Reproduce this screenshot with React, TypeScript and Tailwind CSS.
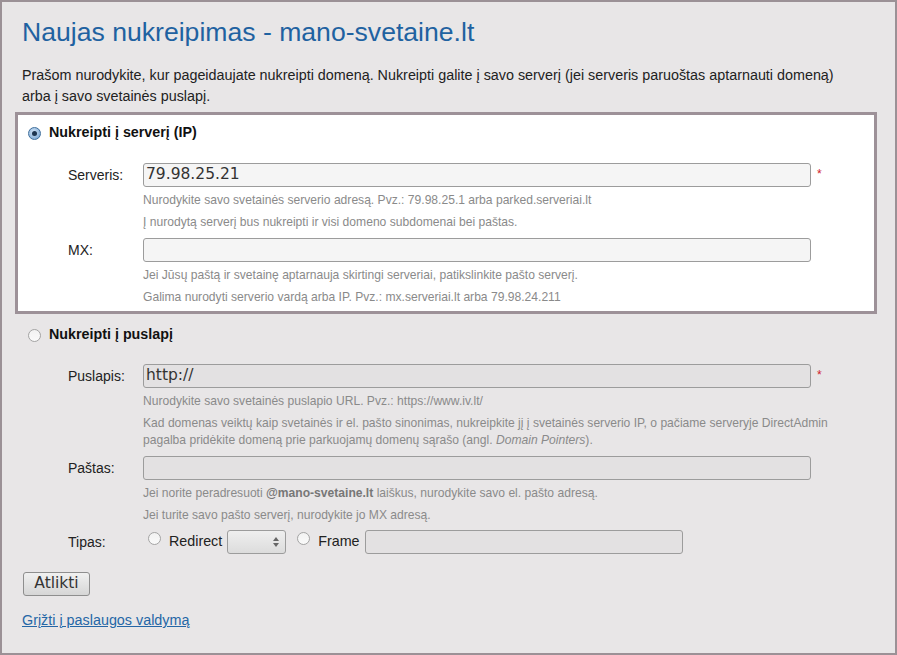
const sans = "font-['Liberation_Sans',Arial,sans-serif]";

function Radio({ checked = false }: { checked?: boolean }) {
  return checked ? (
    <span className="inline-flex h-[13px] w-[13px] shrink-0 items-center justify-center rounded-full border border-[#3f6f9c] bg-[radial-gradient(circle_at_40%_35%,#cfe2f5,#6f9fd0)]">
      <span className="h-[5px] w-[5px] rounded-full bg-[#1d3550]" />
    </span>
  ) : (
    <span className="inline-block h-[13px] w-[13px] shrink-0 rounded-full border border-[#a4a4a4] bg-[linear-gradient(#f2f2f2,#fafafa)]" />
  );
}

function Field({
  label,
  value,
  disabled = false,
  required = false,
}: {
  label: string;
  value?: string;
  disabled?: boolean;
  required?: boolean;
}) {
  return (
    <div className="flex items-center">
      <div className="w-[76px] pl-[1px] text-[14px] text-[#222]">{label}</div>
      <div
        className={`flex h-[24px] w-[668px] items-center rounded-[3px] border border-[#9c9c9c] px-[2px] font-['DejaVu_Sans',sans-serif] text-[15.5px] text-[#333] ${
          disabled ? "bg-[#e3e1e2]" : "bg-[#f5f5f5]"
        }`}
      >
        {value}
      </div>
      {required && <span className="ml-[6px] -mt-[3px] text-[12px] text-[#d0202a]">*</span>}
    </div>
  );
}

function Hint({ children }: { children: React.ReactNode }) {
  return (
    <div className="mt-[5px] pl-[76px] text-[12.1px] leading-[17px] text-[#8a8a8a]">{children}</div>
  );
}

export default function App() {
  return (
    <div className={`${sans} h-[655px] w-[897px] border-2 border-[#9b9196] bg-[#e8e6e7] px-[20px] pt-[14px]`}>
      <h1 className="text-[26.6px] leading-[32px] text-[#1f62a1]">Naujas nukreipimas - mano-svetaine.lt</h1>
      <p className="mt-[17px] text-[14.35px] leading-[21px] text-[#222]">
        Prašom nurodykite, kur pageidaujate nukreipti domeną. Nukreipti galite į savo serverį (jei serveris paruoštas aptarnauti domeną)
        <br />
        arba į savo svetainės puslapį.
      </p>

      <div className="ml-[-7px] mt-[5px] w-[862px] border-[3px] border-[#9d9198] bg-white pb-[5px] pl-[4px] pt-[8px]">
        <div className="flex h-[20px] items-center gap-[8px] pl-[6px]">
          <Radio checked />
          <span className="text-[14.3px] font-bold text-[#111]">Nukreipti į serverį (IP)</span>
        </div>
        <div className="mt-[20px] pl-[45px]">
          <Field label="Serveris:" value="79.98.25.21" required />
          <Hint>Nurodykite savo svetainės serverio adresą. Pvz.: 79.98.25.1 arba parked.serveriai.lt</Hint>
          <Hint>Į nurodytą serverį bus nukreipti ir visi domeno subdomenai bei paštas.</Hint>
          <div className="mt-[7px]">
            <Field label="MX:" />
          </div>
          <Hint>Jei Jūsų paštą ir svetainę aptarnauja skirtingi serveriai, patikslinkite pašto serverį.</Hint>
          <Hint>Galima nurodyti serverio vardą arba IP. Pvz.: mx.serveriai.lt arba 79.98.24.211</Hint>
        </div>
      </div>

      <div className="mt-[11px] flex h-[20px] items-center gap-[8px] pl-[6px]">
        <Radio />
        <span className="text-[14.3px] font-bold text-[#111]">Nukreipti į puslapį</span>
      </div>
      <div className="mt-[19px] pl-[45px]">
        <Field label="Puslapis:" value="http://" disabled required />
        <Hint>Nurodykite savo svetainės puslapio URL. Pvz.: https://www.iv.lt/</Hint>
        <Hint>
          Kad domenas veiktų kaip svetainės ir el. pašto sinonimas, nukreipkite jį į svetainės serverio IP, o pačiame serveryje DirectAdmin
          <br />
          pagalba pridėkite domeną prie parkuojamų domenų sąrašo (angl. <i>Domain Pointers</i>).
        </Hint>
        <div className="mt-[7px]">
          <Field label="Paštas:" disabled />
        </div>
        <Hint>
          Jei norite peradresuoti <b className="text-[#777]">@mano-svetaine.lt</b> laiškus, nurodykite savo el. pašto adresą.
        </Hint>
        <Hint>Jei turite savo pašto serverį, nurodykite jo MX adresą.</Hint>
        <div className="mt-[6px] flex h-[24px] items-center">
          <div className="w-[76px] pl-[1px] text-[14px] text-[#222]">Tipas:</div>
          <div className="ml-[5px] -mt-[4px]">
            <Radio />
          </div>
          <span className="ml-[8px] text-[14.3px] text-[#222]">Redirect</span>
          <div className="ml-[5px] flex h-[24px] w-[59px] items-center justify-end rounded-[3px] border border-[#9c9c9c] bg-[linear-gradient(#efefef,#dcdcdc)] pr-[6px]">
            <div className="flex flex-col items-center gap-[2px]">
              <span className="h-0 w-0 border-x-[3px] border-b-[4px] border-x-transparent border-b-[#666]" />
              <span className="h-0 w-0 border-x-[3px] border-t-[4px] border-x-transparent border-t-[#666]" />
            </div>
          </div>
          <div className="ml-[11px] -mt-[4px]">
            <Radio />
          </div>
          <span className="ml-[8px] text-[14.3px] text-[#222]">Frame</span>
          <div className="ml-[5px] h-[24px] w-[318px] rounded-[3px] border border-[#9c9c9c] bg-[#e3e1e2]" />
        </div>
      </div>

      <button className="ml-[1px] mt-[18px] flex h-[24px] w-[67px] items-center justify-center rounded-[3px] border border-[#8e8e8e] bg-[linear-gradient(#f0f0f0,#d6d6d6)] font-['DejaVu_Sans',sans-serif] text-[15.5px] text-[#333]">
        Atlikti
      </button>

      <a href="#" className="mt-[14px] block w-fit text-[14.35px] leading-[20px] text-[#2566a6] underline">
        Grįžti į paslaugos valdymą
      </a>
    </div>
  );
}
